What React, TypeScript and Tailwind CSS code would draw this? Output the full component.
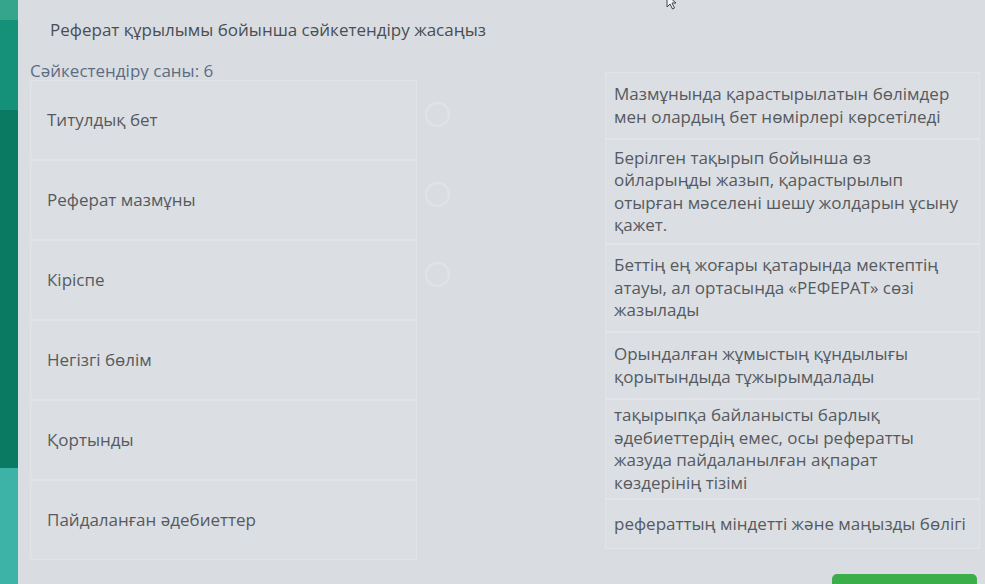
import React from "react";

const leftItems = [
  "Титулдық бет",
  "Реферат мазмұны",
  "Кіріспе",
  "Негізгі бөлім",
  "Қортынды",
  "Пайдаланған әдебиеттер",
];

const rightItems: { lines: string[]; h: string }[] = [
  { lines: ["Мазмұнында қарастырылатын бөлімдер", "мен олардың бет нөмірлері көрсетіледі"], h: "h-[67px]" },
  {
    lines: [
      "Берілген тақырып бойынша өз",
      "ойларыңды жазып, қарастырылып",
      "отырған мәселені шешу жолдарын ұсыну",
      "қажет.",
    ],
    h: "h-[105px]",
  },
  {
    lines: ["Беттің ең жоғары қатарында мектептің", "атауы, ал ортасында «РЕФЕРАТ» сөзі", "жазылады"],
    h: "h-[88px]",
  },
  { lines: ["Орындалған жұмыстың құндылығы", "қорытындыда тұжырымдалады"], h: "h-[67px]" },
  {
    lines: [
      "тақырыпқа байланысты барлық",
      "әдебиеттердің емес, осы рефератты",
      "жазуда пайдаланылған ақпарат",
      "көздерінің тізімі",
    ],
    h: "h-[100px]",
  },
  { lines: ["рефераттың міндетті және маңызды бөлігі"], h: "h-[50px]" },
];

export default function App() {
  return (
    <div
      className="relative flex h-[584px] w-[985px] overflow-hidden bg-[#d9dde2] text-[#565a5f]"
      style={{ fontFamily: '"Open Sans", "Noto Sans", sans-serif' }}
    >
      {/* left teal strip */}
      <div className="flex w-[18px] shrink-0 flex-col">
        <div className="h-[20px] bg-[#35a68b]" />
        <div className="h-[90px] bg-[#15917a]" />
        <div className="h-[358px] bg-[#0b7a63]" />
        <div className="flex-1 bg-[#3cb3a6]" />
      </div>

      {/* cursor */}
      <svg className="absolute left-[664px] top-[-6px]" width="16" height="16" viewBox="0 0 16 16">
        <path d="M3 1 L3 13 L6 10 L8.5 15 L10.5 14 L8 9 L12 9 Z" fill="#f4f5f6" stroke="#444" strokeWidth="1" />
      </svg>

      <div className="flex flex-1 flex-col pl-[12px]">
        <div className="ml-[20px] mt-[17px] h-[25px] text-[17px] leading-[25px] text-[#4a4e53]">
          Реферат құрылымы бойынша сәйкетендіру жасаңыз
        </div>

        <div className="mt-[19px] flex items-start">
          {/* left column */}
          <div className="flex w-[387px] flex-col">
            <div className="h-[19px] text-[17px] leading-[19px] text-[#5d6c83]">Сәйкестендіру саны: 6</div>
            {leftItems.map((t) => (
              <div
                key={t}
                className="flex h-[80px] items-center border border-[#e1e4e8] bg-[#dbdfe3] pl-[16px] text-[17px]"
              >
                {t}
              </div>
            ))}
          </div>

          {/* middle circles */}
          <div className="flex w-[188px] flex-col pl-[8px] pt-[41px]">
            {[0, 1, 2].map((i) => (
              <div key={i} className="flex h-[80px] items-start">
                <div className="h-[25px] w-[25px] rounded-full border-2 border-[#e1e4e7]" />
              </div>
            ))}
          </div>

          {/* right column */}
          <div className="mt-[11px] flex w-[375px] flex-col">
            {rightItems.map((r, i) => (
              <div
                key={i}
                className={`flex ${r.h} flex-col justify-center border border-[#e1e4e8] bg-[#dbdfe3] pl-[8px] text-[17px] leading-[22.5px]`}
              >
                {r.lines.map((l) => (
                  <span key={l} className="whitespace-nowrap">
                    {l}
                  </span>
                ))}
              </div>
            ))}
            <div className="ml-[227px] mt-[25px] h-[20px] w-[145px] rounded-[5px] bg-[#3aae49]" />
          </div>
        </div>
      </div>
    </div>
  );
}
